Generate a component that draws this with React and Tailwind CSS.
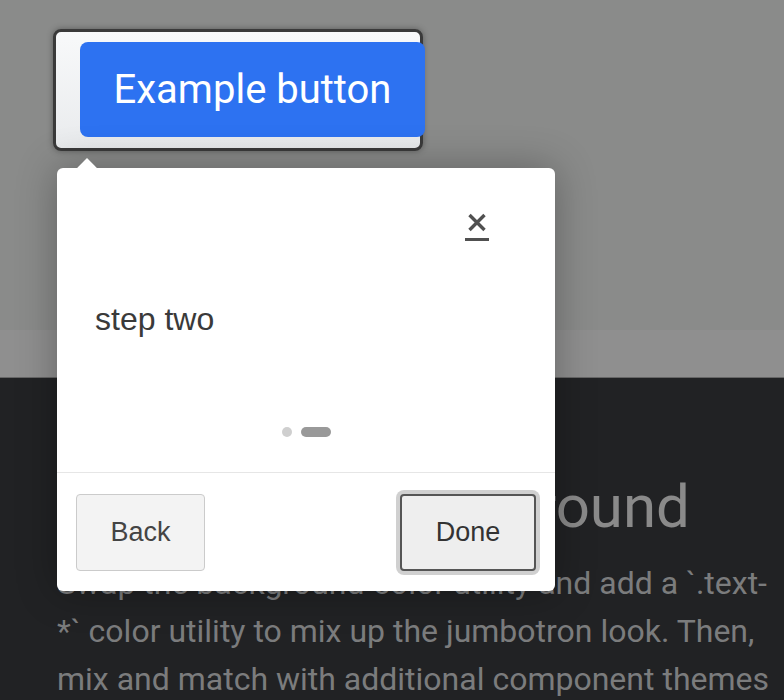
export default function App() {
  return (
    <div className="relative w-[784px] h-[700px] overflow-hidden flex flex-col font-['Roboto',sans-serif]">
      {/* top light section (under overlay) */}
      <div className="h-[330px] shrink-0 bg-[#8a8b8a] pt-[29px] pl-[53px]">
        <div className="w-[370px] h-[122px] border-[3px] border-[#3a3a3a] rounded-[8px] bg-gradient-to-b from-[#f8f9fa] to-[#e9ebed] pl-[24px] pt-[10px] shadow-[0_0_6px_rgba(0,0,0,0.35)]">
          <button className="w-[345px] h-[95px] shrink-0 rounded-[8px] bg-[#2d72f1] text-white text-[40px] font-normal flex items-center justify-center leading-none">
            Example button
          </button>
        </div>
      </div>
      <div className="h-[48px] shrink-0 bg-[#8f8f8f] border-b border-[#666]" />
      {/* dark section */}
      <div className="flex-1 bg-[#212224] pl-[57px] pt-[93px]">
        <h1 className="text-[60px] leading-[72px] font-normal text-[#8a8a8a] whitespace-nowrap">Change the background</h1>
        <div className="mt-[16px] text-[32px] leading-[48px] font-normal text-[#7b7c7d]">
          <div className="whitespace-nowrap">Swap the background-color utility and add a `.text-</div>
          <div className="whitespace-nowrap">*` color utility to mix up the jumbotron look. Then,</div>
          <div className="whitespace-nowrap">mix and match with additional component themes</div>
        </div>
      </div>

      {/* tour popup */}
      <div className="absolute left-[57px] top-[168px] w-[498px] h-[423px] bg-white rounded-[6px] shadow-[0_0_40px_rgba(0,0,0,0.3)] flex flex-col font-['Liberation_Sans',Arial,sans-serif]">
        <div className="absolute left-[23px] -top-[7px] w-[14px] h-[14px] bg-white rotate-45" />
        <div className="flex justify-end pt-[45px] pr-[66px]">
          <button className="flex flex-col items-center w-[24px]">
            <svg width="20" height="19" viewBox="0 0 20 19" fill="none">
              <path d="M2.5 2 L17.5 17 M17.5 2 L2.5 17" stroke="#505050" strokeWidth="3.4" strokeLinecap="butt" />
            </svg>
            <div className="mt-[6px] w-[24px] h-[3px] bg-[#505050]" />
          </button>
        </div>
        <p className="mt-[60px] pl-[38px] text-[32px] leading-[36px] text-[#3a3a3a]">step two</p>
        <div className="mt-[90px] flex justify-center items-center gap-[9px]">
          <div className="w-[10px] h-[10px] rounded-full bg-[#cfcfcf]" />
          <div className="w-[30px] h-[10px] rounded-full bg-[#999]" />
        </div>
        <div className="mt-[35px] border-t border-[#e6e6e6]" />
        <div className="flex justify-between px-[19px] pt-[21px] pb-[20px]">
          <button className="w-[129px] h-[77px] border border-[#cbcbcb] bg-[#f3f3f3] rounded-[4px] text-[27px] text-[#444] flex items-center justify-center">
            Back
          </button>
          <button className="w-[136px] h-[77px] border-2 border-[#555] bg-[#eeeeee] rounded-[4px] text-[27px] text-[#333] flex items-center justify-center shadow-[0_0_0_4px_#d0d0d0]">
            Done
          </button>
        </div>
      </div>
    </div>
  );
}
